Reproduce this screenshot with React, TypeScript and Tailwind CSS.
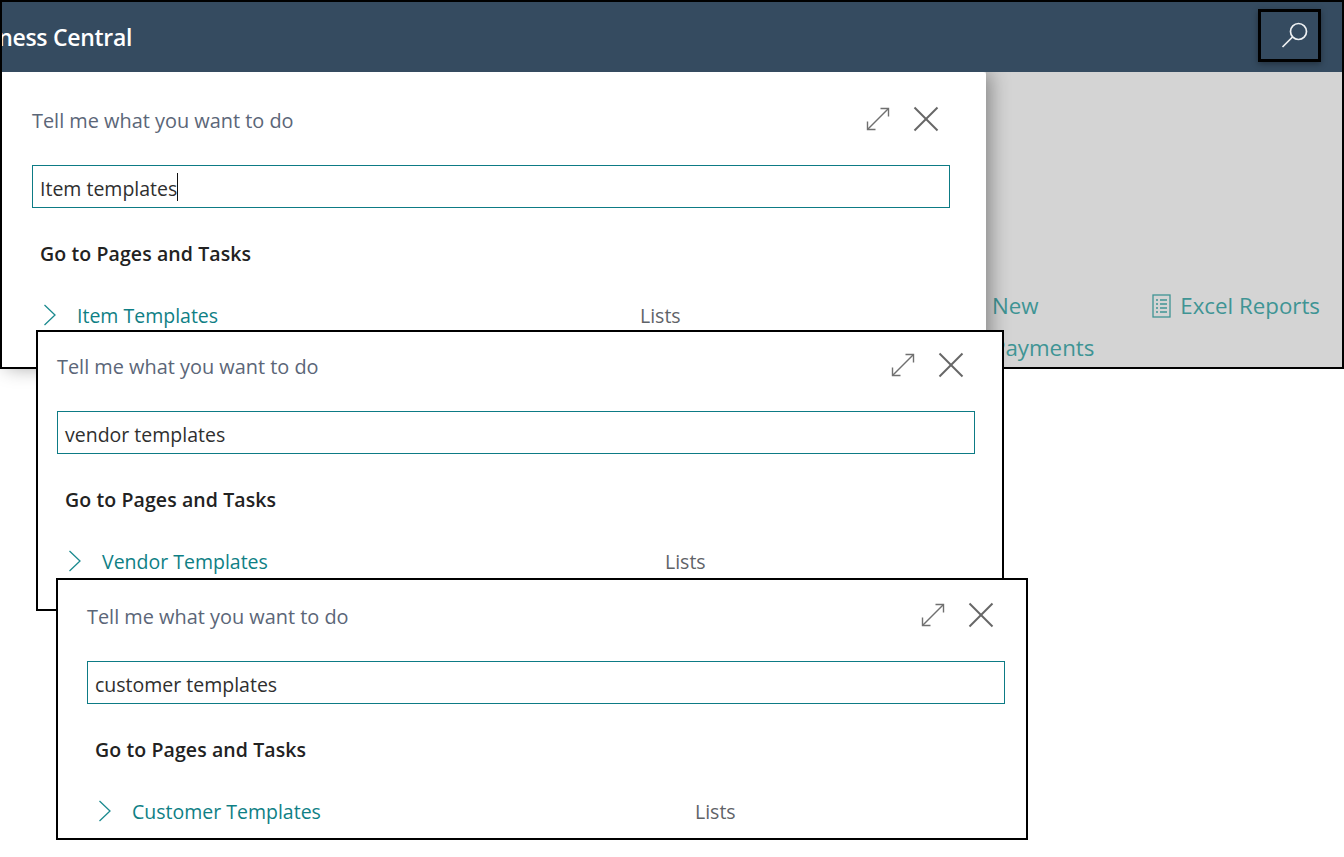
const font = { fontFamily: '"Open Sans", "Noto Sans", sans-serif' };

function ExpandIcon() {
  return (
    <svg width="24" height="24" viewBox="0 0 24 24" fill="none" stroke="#707070" strokeWidth="1.4">
      <path d="M1.5 22.5 22.5 1.5" />
      <path d="M14.5 1.5h8v8" />
      <path d="M1.5 14.5v8h8" />
    </svg>
  );
}

function CloseIcon() {
  return (
    <svg width="26" height="26" viewBox="0 0 26 26" fill="none" stroke="#666666" strokeWidth="2">
      <path d="M1.5 1.5 24.5 24.5" />
      <path d="M24.5 1.5 1.5 24.5" />
    </svg>
  );
}

function ChevronIcon() {
  return (
    <svg width="14" height="22" viewBox="0 0 14 22" fill="none" stroke="#1b8a8f" strokeWidth="1.3">
      <path d="M1.5 1 12 11 1.5 21" />
    </svg>
  );
}

function SearchIcon() {
  return (
    <svg width="28" height="28" viewBox="0 0 28 28" fill="none" stroke="#eef1f3" strokeWidth="1.7">
      <circle cx="17.5" cy="10.5" r="8" />
      <path d="M11.5 16 1.5 26" />
    </svg>
  );
}

function TellMe({ query, link, caret }: { query: string; link: string; caret?: boolean }) {
  return (
    <div className="w-[918px]">
      <div className="flex h-[28px] items-center justify-between">
        <span className="text-[19.9px] text-[#5b6678]">Tell me what you want to do</span>
        <div className="mt-[-4px] flex items-center gap-[23px] pr-[11px]">
          <ExpandIcon />
          <CloseIcon />
        </div>
      </div>
      <div className="mt-[30px] flex h-[43px] items-center border border-[#0d7b85] pl-[7px] pt-[5px] text-[19.5px] text-[#2f2f2f]">
        {query}
        {caret ? <span className="mt-[-5px] h-[28px] w-px bg-[#111111]" /> : null}
      </div>
      <div className="mt-[31px] pl-[8px] text-[19.5px] font-semibold tracking-[0.1px] text-[#222222]">Go to Pages and Tasks</div>
      <div className="mt-[33px] flex h-[28px] items-center text-[19.5px]">
        <span className="ml-[11px] flex w-[34px]">
          <ChevronIcon />
        </span>
        <span className="w-[563px] text-[#0f7f85]">{link}</span>
        <span className="text-[#5f6368]">Lists</span>
      </div>
    </div>
  );
}

export default function App() {
  return (
    <div className="relative h-[857px] w-[1344px] overflow-hidden bg-white" style={font}>
      <div className="absolute left-0 top-0 flex h-[369px] w-[1344px] flex-col border-2 border-black">
        <div className="relative z-20 flex h-[70px] shrink-0 items-center justify-between bg-[#354b60]">
          <div className="w-[132px] overflow-hidden whitespace-nowrap">
            <span className="ml-[-50px] inline-block text-[23px] font-semibold tracking-[-0.3px] text-white">Business Central</span>
          </div>
          <div className="mr-[21px] mt-[-3px] flex h-[53px] w-[63px] items-center justify-center border-[3px] border-black pl-[11px] pb-[2px] shadow-[0_2px_6px_rgba(0,0,0,0.35)]">
            <SearchIcon />
          </div>
        </div>
        <div className="flex min-h-0 flex-1">
          <div className="relative z-10 w-[984px] rounded-tr-[3px] bg-white pl-[30px] pt-[35px] shadow-[4px_0_20px_rgba(0,0,0,0.38)]">
            <TellMe query="Item templates" link="Item Templates" caret />
          </div>
          <div className="flex min-h-0 flex-1 justify-between overflow-hidden bg-[#d4d4d4] pl-[6px] pr-[22px] pt-[213px] text-[22.3px] text-[#3f9494]">
            <div className="flex flex-col leading-[42px]">
              <span>New</span>
              <span>Payments</span>
            </div>
            <div className="flex h-[42px] items-center gap-[9px]">
              <svg width="19" height="24" viewBox="0 0 19 24" fill="none" stroke="#3f9494" strokeWidth="1.3">
                <rect x="1" y="1" width="17" height="22" />
                <path d="M4 6h2M8 6h7M4 10h2M8 10h7M4 14h2M8 14h7M4 18h2M8 18h7" />
              </svg>
              <span>Excel Reports</span>
            </div>
          </div>
        </div>
      </div>

      <div className="absolute left-[36px] top-[330px] z-20 h-[281px] w-[968px] border-2 border-black bg-white pl-[19px] pt-[21px]">
        <TellMe query="vendor templates" link="Vendor Templates" />
      </div>

      <div className="absolute left-[56px] top-[578px] z-30 h-[262px] w-[972px] border-2 border-black bg-white pl-[29px] pt-[23px]">
        <TellMe query="customer templates" link="Customer Templates" />
      </div>
    </div>
  );
}
